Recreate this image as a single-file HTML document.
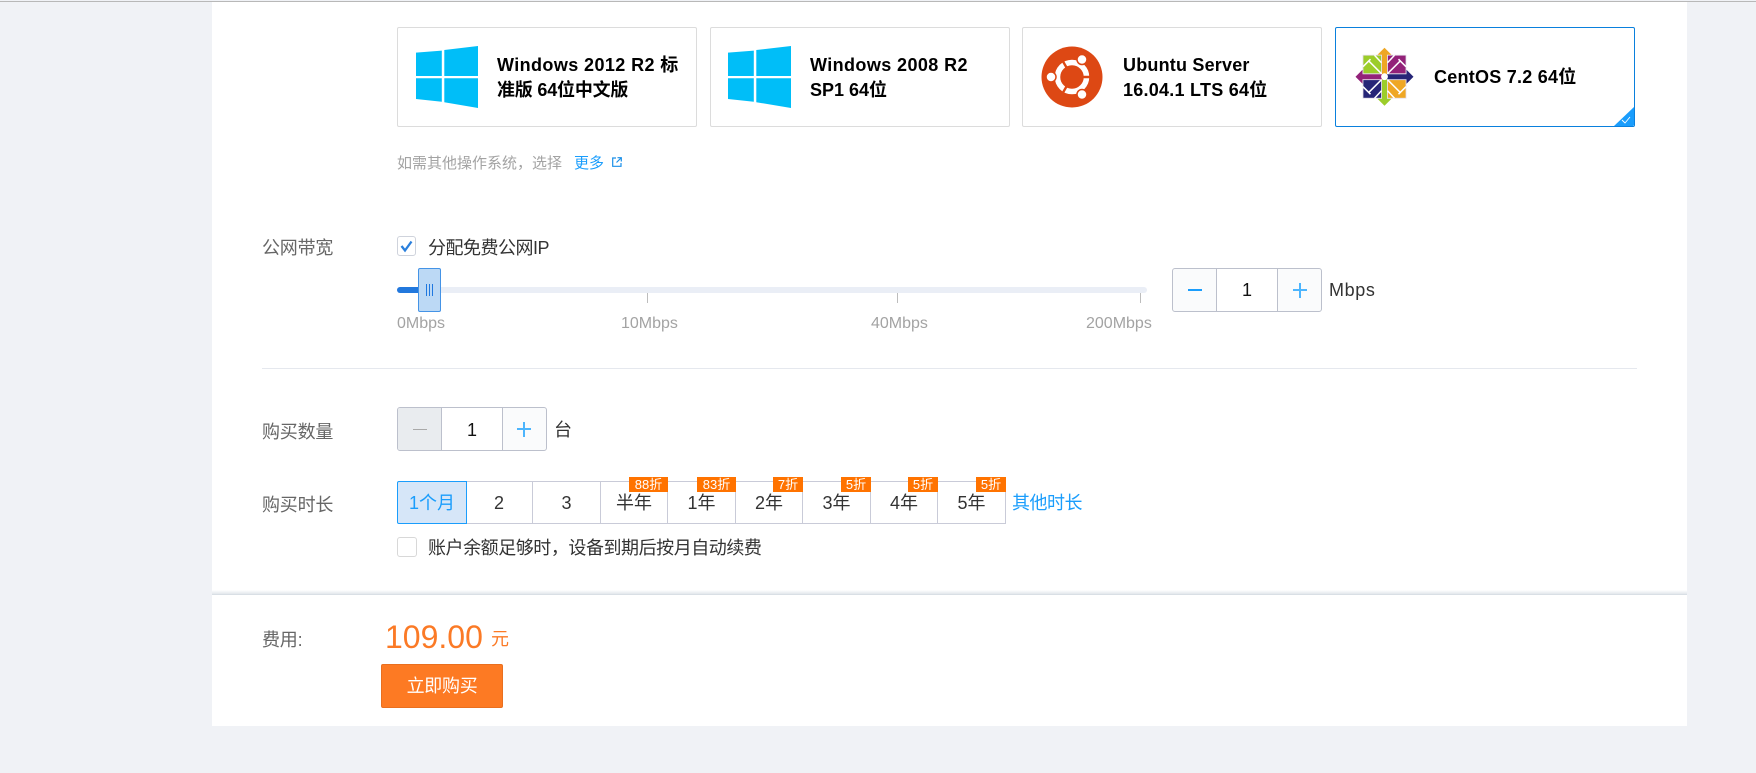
<!DOCTYPE html>
<html lang="zh"><head><meta charset="utf-8"><title>购买</title>
<style>
html,body{margin:0;padding:0}
body{width:1756px;height:773px;background:#f0f2f6;position:relative;overflow:hidden;font-family:"Liberation Sans","Noto Sans CJK SC",sans-serif;font-size:18px;color:#333}
div,a,span.a{position:absolute;box-sizing:border-box}
.t{line-height:24px;height:24px;white-space:nowrap}
.lb{color:#666;left:262px;letter-spacing:-.2px}
.card{top:27px;height:100px;width:300px;background:#fff;border:1px solid #dcdcdc;border-radius:2px}
.ct{color:#000;font-weight:bold;font-size:18px;line-height:25px;white-space:nowrap}
.mk{font-size:16px;color:#a3a3a3;top:312px;line-height:24px;white-space:nowrap}
.tick{top:293px;width:1px;height:10px;background:#bdbdbd}
.cell{top:481px;height:43px;border:1px solid #c9cbd8;border-left:0;text-align:center;line-height:42px;color:#333;background:#fff}
.bd{top:477px;height:15px;background:#ff7300;color:#fff;font-size:13px;line-height:15px;text-align:center;white-space:nowrap}
svg{position:absolute;display:block;overflow:visible}
</style></head><body>
<div style="left:0;top:1px;width:1756px;height:1px;background:#b8b8b8"></div>
<div style="left:212px;top:2px;width:1475px;height:724px;background:#fff"></div>

<!-- OS cards -->
<div class="card" style="left:397px"></div>
<div class="card" style="left:710px"></div>
<div class="card" style="left:1022px"></div>
<div class="card" style="left:1335px;border-color:#0a80dd"></div>

<svg style="left:0;top:0" width="1756" height="130">
 <g fill="#00bef8">
  <polygon points="416,52.6 441.8,50.6 441.8,76 416,76"/><polygon points="444.3,50 478,46 478,76 444.3,76"/>
  <polygon points="416,78.3 441.8,78.3 441.8,101.7 416,99"/><polygon points="444.3,78.3 478,78.3 478,108 444.3,102.2"/>
  <polygon points="728,52.6 753.8,50.6 753.8,76 728,76"/><polygon points="756.3,50 791,46 791,76 756.3,76"/>
  <polygon points="728,78.3 753.8,78.3 753.8,101.7 728,99"/><polygon points="756.3,78.3 791,78.3 791,108 756.3,102.2"/>
 </g>
 <!-- ubuntu -->
 <circle cx="1072" cy="77" r="30.5" fill="#dd4814"/>
 <circle cx="1072" cy="77" r="14.5" fill="none" stroke="#fff" stroke-width="5.5"/>
 <g stroke="#dd4814" stroke-width="2.4"><line x1="1072" y1="77" x2="1094" y2="77"/><line x1="1072" y1="77" x2="1061" y2="58"/><line x1="1072" y1="77" x2="1061" y2="96"/></g>
 <g fill="#fff" stroke="#dd4814" stroke-width="1.5"><circle cx="1051" cy="77" r="5"/><circle cx="1082" cy="59.5" r="5"/><circle cx="1082" cy="94.5" r="5"/></g>
 <!-- centos -->
 <g transform="translate(1384.5 76.7)">
  <rect x="-21.5" y="-21.5" width="18.5" height="18.5" fill="#9ccd2a" stroke="#e3dce8" stroke-width=".8"/>
  <rect x="3" y="-21.5" width="18.5" height="18.5" fill="#932279" stroke="#e3dce8" stroke-width=".8"/>
  <rect x="3" y="3" width="18.5" height="18.5" fill="#efa724" stroke="#e3dce8" stroke-width=".8"/>
  <rect x="-21.5" y="3" width="18.5" height="18.5" fill="#262577" stroke="#e3dce8" stroke-width=".8"/>
  <g fill="none" stroke="#fff" stroke-width="1.5">
   <path d="M-2,-2 L-16,-16 M-21.5,-10 L-14,-17.5 M-10,-21.5 L-3,-14"/>
   <path d="M2,-2 L16,-16 M21.5,-10 L14,-17.5 M10,-21.5 L3,-14"/>
   <path d="M2,2 L16,16 M21.5,10 L14,17.5 M10,21.5 L3,14"/>
   <path d="M-2,2 L-16,16 M-21.5,10 L-14,17.5 M-10,21.5 L-3,14"/>
  </g>
  <polygon points="0,-29 7,-22 2.5,-22 2.5,-2 0,0 -2.5,-2 -2.5,-22 -7,-22" fill="#efa724"/>
  <polygon points="29,0 22,7 22,2.5 2,2.5 0,0 2,-2.5 22,-2.5 22,-7" fill="#262577"/>
  <polygon points="0,29 7,22 2.5,22 2.5,2 0,0 -2.5,2 -2.5,22 -7,22" fill="#9ccd2a"/>
  <polygon points="-29,0 -22,7 -22,2.5 -2,2.5 0,0 -2,-2.5 -22,-2.5 -22,-7" fill="#932279"/>
  <circle r="3.4" fill="#fff"/>
 </g>
 <!-- corner -->
 <polygon points="1634,107 1634,125 1633,126 1614,126" fill="#1a9dfc"/>
 <path d="M1622,120 L1625,123 L1630,117" fill="none" stroke="#fff" stroke-width=".9"/>
</svg>

<div class="ct" style="left:497px;top:53px;letter-spacing:.4px">Windows 2012 R2 标<br><span style="letter-spacing:-.2px">准版 64位中文版</span></div>
<div class="ct" style="left:810px;top:53px;letter-spacing:.4px">Windows 2008 R2<br><span style="letter-spacing:0">SP1 64位</span></div>
<div class="ct" style="left:1123px;top:53px;letter-spacing:.2px">Ubuntu Server<br><span style="letter-spacing:.25px">16.04.1 LTS 64位</span></div>
<div class="ct" style="left:1434px;top:65px;letter-spacing:.25px">CentOS 7.2 64位</div>

<div class="t" style="left:397px;top:152px;font-size:15px;color:#a3a3a3">如需其他操作系统，选择</div>
<div class="t" style="left:574px;top:152px;font-size:15px;color:#1a9dfc">更多</div>
<svg style="left:612px;top:157px" width="10" height="10" viewBox="0 0 10 10"><path d="M4,1 H.7 V9.3 H9 V6 M5.5,.7 H9.3 V4.5 M9,1 L4.5,5.5" fill="none" stroke="#1a8fe8" stroke-width="1.2"/></svg>

<!-- bandwidth -->
<div class="t lb" style="top:236px">公网带宽</div>
<div style="left:397px;top:236px;width:19px;height:20px;border:1px solid #cfd3dc;border-radius:3px;background:#fff"></div>
<svg style="left:397px;top:236px" width="19" height="20"><path d="M4.5,10 L8,14.5 L14.5,5.5" fill="none" stroke="#2a7fdc" stroke-width="2.3"/></svg>
<div class="t" style="left:428px;top:236px;letter-spacing:-.5px">分配免费公网IP</div>

<div style="left:397px;top:287px;width:750px;height:6px;background:#eaeef6;border-radius:3px"></div>
<div style="left:397px;top:287px;width:24px;height:6px;background:#2278dd;border-radius:3px 0 0 3px"></div>
<div class="tick" style="left:647px"></div>
<div class="tick" style="left:897px"></div>
<div class="tick" style="left:1140px"></div>
<div style="left:418px;top:268px;width:23px;height:44px;background:#bcd9f5;border:1px solid #4493e6;border-radius:2px"></div>
<div style="left:426px;top:284px;width:1px;height:12px;background:#1f78e0"></div>
<div style="left:429px;top:284px;width:1px;height:12px;background:#1f78e0"></div>
<div style="left:432px;top:284px;width:1px;height:12px;background:#1f78e0"></div>
<div class="mk" style="left:397px">0Mbps</div>
<div class="mk" style="left:621px">10Mbps</div>
<div class="mk" style="left:871px">40Mbps</div>
<div class="mk" style="left:1086px">200Mbps</div>

<!-- stepper 1 -->
<div style="left:1172px;top:268px;width:150px;height:44px;border:1px solid #bcc0cc;border-radius:3px;background:#fafbfc"></div>
<div style="left:1216px;top:269px;width:62px;height:42px;background:#fff;border-left:1px solid #bcc0cc;border-right:1px solid #bcc0cc"></div>
<div style="left:1188px;top:289px;width:14px;height:2px;background:#1a9dfc"></div>
<div style="left:1293px;top:289px;width:14px;height:2px;background:#4db5fd"></div>
<div style="left:1299px;top:283px;width:2px;height:15px;background:#4db5fd"></div>
<div class="t" style="left:1216px;width:62px;text-align:center;top:278px;color:#111">1</div>
<div class="t" style="left:1329px;top:278px;letter-spacing:.6px">Mbps</div>

<div style="left:262px;top:368px;width:1375px;height:1px;background:#e5e8ee"></div>

<!-- quantity -->
<div class="t lb" style="top:420px">购买数量</div>
<div style="left:397px;top:407px;width:150px;height:44px;border:1px solid #bcc0cc;border-radius:3px;background:#fafbfc"></div>
<div style="left:398px;top:408px;width:43px;height:42px;background:#e9ecef;border-radius:2px 0 0 2px"></div>
<div style="left:441px;top:408px;width:62px;height:42px;background:#fff;border-left:1px solid #bcc0cc;border-right:1px solid #bcc0cc"></div>
<div style="left:413px;top:429px;width:14px;height:1px;background:#a9a9a9"></div>
<div style="left:517px;top:428px;width:14px;height:2px;background:#4db5fd"></div>
<div style="left:523px;top:422px;width:2px;height:15px;background:#4db5fd"></div>
<div class="t" style="left:441px;width:62px;text-align:center;top:418px;color:#111">1</div>
<div class="t" style="left:554px;top:418px">台</div>

<!-- duration -->
<div class="t lb" style="top:493px">购买时长</div>
<div class="cell" style="left:466px;width:67px">2</div>
<div class="cell" style="left:533px;width:68px">3</div>
<div class="cell" style="left:601px;width:67px">半年</div>
<div class="cell" style="left:668px;width:68px">1年</div>
<div class="cell" style="left:736px;width:67px">2年</div>
<div class="cell" style="left:803px;width:68px">3年</div>
<div class="cell" style="left:871px;width:67px">4年</div>
<div class="cell" style="left:938px;width:68px;border-right:1px solid #c9cbd8">5年</div>
<div class="cell" style="left:397px;width:70px;background:#d6e6f8;border:1px solid #1a9dfc;border-radius:2px 0 0 2px;color:#1a9dfc">1个月</div>
<div class="bd" style="left:629px;width:39px">88折</div>
<div class="bd" style="left:697px;width:39px">83折</div>
<div class="bd" style="left:773px;width:30px">7折</div>
<div class="bd" style="left:841px;width:30px">5折</div>
<div class="bd" style="left:908px;width:30px">5折</div>
<div class="bd" style="left:976px;width:30px">5折</div>
<div class="t" style="left:1012px;top:491px;color:#1a9dfc;letter-spacing:-.5px">其他时长</div>

<div style="left:397px;top:537px;width:20px;height:20px;border:1px solid #d8d8d8;border-radius:3px;background:#fff"></div>
<div class="t" style="left:428px;top:536px;letter-spacing:-.45px">账户余额足够时，设备到期后按月自动续费</div>

<!-- footer -->
<div style="left:212px;top:590px;width:1475px;height:4px;background:linear-gradient(#fff,#e2e7ec)"></div>
<div style="left:212px;top:594px;width:1475px;height:1px;background:#d9dfe5"></div>
<div class="t lb" style="top:628px">费用:</div>
<div style="left:385px;top:617px;font-size:32px;line-height:40px;color:#fb7a26;white-space:nowrap">109.00</div>
<div class="t" style="left:491px;top:627px;color:#fb7a26">元</div>
<div style="left:381px;top:664px;width:122px;height:44px;background:#fd7a23;border:1px solid #e96f1f;border-radius:2px;color:#fff;text-align:center;line-height:42px;letter-spacing:-.3px">立即购买</div>
</body></html>
